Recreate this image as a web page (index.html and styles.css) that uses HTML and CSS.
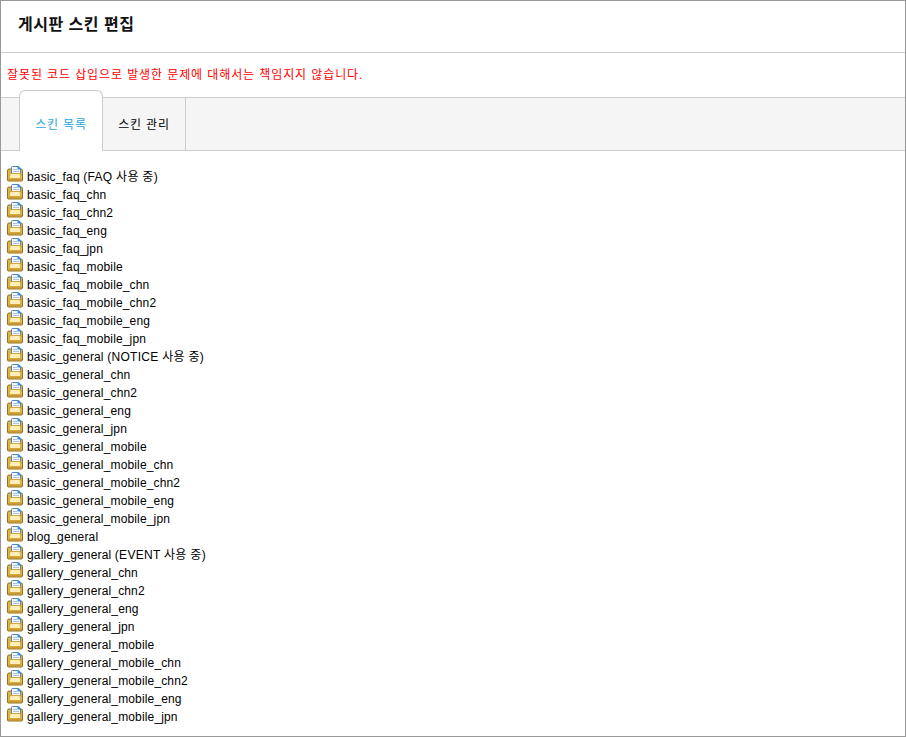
FILE: index.html
```html
<!DOCTYPE html>
<html lang="ko">
<head>
<meta charset="utf-8">
<title>게시판 스킨 편집</title>
<link rel="stylesheet" href="styles.css">
</head>
<body>
<svg class="defs" width="0" height="0" aria-hidden="true">
  <symbol id="folder" viewBox="0 0 16 16">
    <path d="M.5 6V4.500a1.500 1.500 0 0 1 1.500-1.500h12a1.500 1.500 0 0 1 1.500 1.500v9.500a1 1 0 0 1-1 1H1.500a1 1 0 0 1-1-1z" fill="#e3b347" stroke="#94701f"/>
    <path d="M4.500 7.500V1.500a1 1 0 0 1 1-1h6l2 2v5z" fill="#f2f7fc" stroke="#5f82a8"/>
    <path d="M10.500 .5h1.500l2 2v1h-3.500z" fill="#2f95ec"/>
    <path d="M6 3.500h4M6 5.500h6" stroke="#a9c3dd"/>
    <path d="M3 7.500h10l.5 3v2h-11v-2z" fill="#fff0b8" stroke="#d2a83f"/>
    <path d="M1 13.500h14" stroke="#c99a33"/>
  </symbol>
</svg>
<main class="panel">
  <header class="head"><h1 class="title">게시판 스킨 편집</h1></header>
  <p class="warn">잘못된 코드 삽입으로 발생한 문제에 대해서는 책임지지 않습니다.</p>
  <nav class="tabs">
    <a class="tab active">스킨 목록</a>
    <a class="tab">스킨 관리</a>
  </nav>
  <ul class="list">
    <li class="row"><svg class="ico"><use href="#folder"/></svg><span>basic_faq <span class="note">(FAQ 사용 중)</span></span></li>
    <li class="row"><svg class="ico"><use href="#folder"/></svg>basic_faq_chn</li>
    <li class="row"><svg class="ico"><use href="#folder"/></svg>basic_faq_chn2</li>
    <li class="row"><svg class="ico"><use href="#folder"/></svg>basic_faq_eng</li>
    <li class="row"><svg class="ico"><use href="#folder"/></svg>basic_faq_jpn</li>
    <li class="row"><svg class="ico"><use href="#folder"/></svg>basic_faq_mobile</li>
    <li class="row"><svg class="ico"><use href="#folder"/></svg>basic_faq_mobile_chn</li>
    <li class="row"><svg class="ico"><use href="#folder"/></svg>basic_faq_mobile_chn2</li>
    <li class="row"><svg class="ico"><use href="#folder"/></svg>basic_faq_mobile_eng</li>
    <li class="row"><svg class="ico"><use href="#folder"/></svg>basic_faq_mobile_jpn</li>
    <li class="row"><svg class="ico"><use href="#folder"/></svg><span>basic_general <span class="note">(NOTICE 사용 중)</span></span></li>
    <li class="row"><svg class="ico"><use href="#folder"/></svg>basic_general_chn</li>
    <li class="row"><svg class="ico"><use href="#folder"/></svg>basic_general_chn2</li>
    <li class="row"><svg class="ico"><use href="#folder"/></svg>basic_general_eng</li>
    <li class="row"><svg class="ico"><use href="#folder"/></svg>basic_general_jpn</li>
    <li class="row"><svg class="ico"><use href="#folder"/></svg>basic_general_mobile</li>
    <li class="row"><svg class="ico"><use href="#folder"/></svg>basic_general_mobile_chn</li>
    <li class="row"><svg class="ico"><use href="#folder"/></svg>basic_general_mobile_chn2</li>
    <li class="row"><svg class="ico"><use href="#folder"/></svg>basic_general_mobile_eng</li>
    <li class="row"><svg class="ico"><use href="#folder"/></svg>basic_general_mobile_jpn</li>
    <li class="row"><svg class="ico"><use href="#folder"/></svg>blog_general</li>
    <li class="row"><svg class="ico"><use href="#folder"/></svg><span>gallery_general <span class="note">(EVENT 사용 중)</span></span></li>
    <li class="row"><svg class="ico"><use href="#folder"/></svg>gallery_general_chn</li>
    <li class="row"><svg class="ico"><use href="#folder"/></svg>gallery_general_chn2</li>
    <li class="row"><svg class="ico"><use href="#folder"/></svg>gallery_general_eng</li>
    <li class="row"><svg class="ico"><use href="#folder"/></svg>gallery_general_jpn</li>
    <li class="row"><svg class="ico"><use href="#folder"/></svg>gallery_general_mobile</li>
    <li class="row"><svg class="ico"><use href="#folder"/></svg>gallery_general_mobile_chn</li>
    <li class="row"><svg class="ico"><use href="#folder"/></svg>gallery_general_mobile_chn2</li>
    <li class="row"><svg class="ico"><use href="#folder"/></svg>gallery_general_mobile_eng</li>
    <li class="row"><svg class="ico"><use href="#folder"/></svg>gallery_general_mobile_jpn</li>
  </ul>
</main>
</body>
</html>
```
FILE: styles.css
```css
* { box-sizing: border-box; }
html, body { margin: 0; padding: 0; background: #fff; }
body { font-family: "Liberation Sans", "Noto Sans CJK KR", sans-serif; font-size: 12px; color: #000; }
.defs { position: absolute; }
.panel { width: 906px; height: 737px; border: 1px solid #999; overflow: hidden; }
.head { height: 52px; border-bottom: 1px solid #ccc; padding: 14px 0 0 17px; }
.title { margin: 0; font-size: 16px; line-height: 20px; font-weight: 700; color: #111; letter-spacing: 0.5px; }
.warn { margin: 0; height: 44px; padding-top: 13px; line-height: 18px; color: #f00; padding-left: 6px; letter-spacing: 0.9px; }
.tabs { display: flex; height: 54px; padding-left: 18px; background: #f5f5f5; border-top: 1px solid #ccc; border-bottom: 1px solid #ccc; }
.tab { width: 83px; display: flex; align-items: center; justify-content: center; padding-bottom: 2px; border-right: 1px solid #ccc; color: #000; letter-spacing: 0.8px; }
.active { margin-top: -8px; height: 61px; width: 84px; padding-top: 4px; padding-bottom: 0; background: #fff; color: #29a7e1; border: 1px solid #ccc; border-bottom: 0; border-radius: 6px 6px 0 0; }
.list { list-style: none; margin: 0; padding: 17px 0 0 6px; }
.row { display: flex; align-items: center; gap: 4px; height: 18px; line-height: 18px; letter-spacing: 0.15px; white-space: nowrap; }
.note { letter-spacing: 0.3px; }
.ico { width: 16px; height: 16px; flex: none; position: relative; top: -3px; }
```
